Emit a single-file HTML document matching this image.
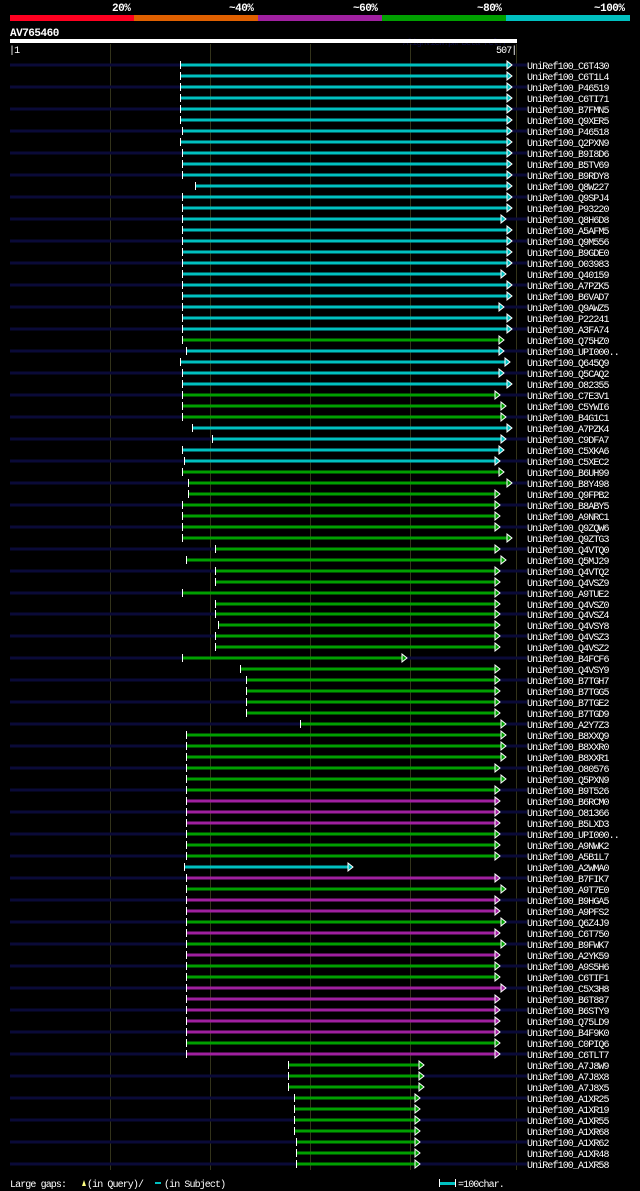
<!DOCTYPE html>
<html><head><meta charset="utf-8"><style>
html,body{margin:0;padding:0;background:#000;}
svg{display:block}
text{font-family:"Liberation Mono",monospace;fill:#fff;font-size:10px;letter-spacing:-0.9px}
.b{font-weight:bold;font-size:11px;letter-spacing:-0.5px}
.n{fill:#0a0a38}
.t{fill:#fff}
.c{fill:#00c0c0}.g{fill:#00a000}.m{fill:#a020a0}
polygon{stroke:#fff;stroke-width:1}
</style></head><body>
<svg width="640" height="1191" xmlns="http://www.w3.org/2000/svg">
<rect width="640" height="1191" fill="#000"/>
<text class="b" x="112" y="11">20%</text>
<text class="b" x="229" y="11">~40%</text>
<text class="b" x="353" y="11">~60%</text>
<text class="b" x="477" y="11">~80%</text>
<text class="b" x="594" y="11">~100%</text>
<rect x="10" y="15" width="124" height="6" fill="#ff0020"/>
<rect x="134" y="15" width="124" height="6" fill="#e06000"/>
<rect x="258" y="15" width="124" height="6" fill="#a020a0"/>
<rect x="382" y="15" width="124" height="6" fill="#00a000"/>
<rect x="506" y="15" width="124" height="6" fill="#00c0c0"/>
<text class="b" x="10" y="36">AV765460</text>
<text x="403" y="45" style="fill:#0a0a40;font-size:9px">AlignView.pm Beta rel.7</text>
<rect x="10" y="39" width="507" height="4" fill="#fff"/>
<text x="9" y="53">|1</text>
<text x="496" y="53">507|</text>
<g stroke="#33331a" stroke-width="1">
<line x1="110.5" y1="44" x2="110.5" y2="1170"/>
<line x1="210.5" y1="44" x2="210.5" y2="1170"/>
<line x1="310.5" y1="44" x2="310.5" y2="1170"/>
<line x1="410.5" y1="44" x2="410.5" y2="1170"/>
<line x1="516.5" y1="44" x2="516.5" y2="1170"/>
</g>

<g transform="translate(0,65)"><rect class="n" x="10" y="-1.5" width="517" height="3"/><rect class="t" x="180" y="-4" width="1" height="8"/><rect class="c" x="181" y="-1.5" width="326" height="3"/><polygon class="c" points="507,-4 512,0 507,4"/><text x="527" y="4">UniRef100_C6T430</text></g>
<g transform="translate(0,76)"><rect class="t" x="180" y="-4" width="1" height="8"/><rect class="c" x="181" y="-1.5" width="326" height="3"/><polygon class="c" points="507,-4 512,0 507,4"/><text x="527" y="4">UniRef100_C6T1L4</text></g>
<g transform="translate(0,87)"><rect class="n" x="10" y="-1.5" width="517" height="3"/><rect class="t" x="180" y="-4" width="1" height="8"/><rect class="c" x="181" y="-1.5" width="326" height="3"/><polygon class="c" points="507,-4 512,0 507,4"/><text x="527" y="4">UniRef100_P46519</text></g>
<g transform="translate(0,98)"><rect class="t" x="180" y="-4" width="1" height="8"/><rect class="c" x="181" y="-1.5" width="326" height="3"/><polygon class="c" points="507,-4 512,0 507,4"/><text x="527" y="4">UniRef100_C6TI71</text></g>
<g transform="translate(0,109)"><rect class="n" x="10" y="-1.5" width="517" height="3"/><rect class="t" x="180" y="-4" width="1" height="8"/><rect class="c" x="181" y="-1.5" width="326" height="3"/><polygon class="c" points="507,-4 512,0 507,4"/><text x="527" y="4">UniRef100_B7FMN5</text></g>
<g transform="translate(0,120)"><rect class="t" x="180" y="-4" width="1" height="8"/><rect class="c" x="181" y="-1.5" width="326" height="3"/><polygon class="c" points="507,-4 512,0 507,4"/><text x="527" y="4">UniRef100_Q9XER5</text></g>
<g transform="translate(0,131)"><rect class="n" x="10" y="-1.5" width="517" height="3"/><rect class="t" x="182" y="-4" width="1" height="8"/><rect class="c" x="183" y="-1.5" width="324" height="3"/><polygon class="c" points="507,-4 512,0 507,4"/><text x="527" y="4">UniRef100_P46518</text></g>
<g transform="translate(0,142)"><rect class="t" x="180" y="-4" width="1" height="8"/><rect class="c" x="181" y="-1.5" width="326" height="3"/><polygon class="c" points="507,-4 512,0 507,4"/><text x="527" y="4">UniRef100_Q2PXN9</text></g>
<g transform="translate(0,153)"><rect class="n" x="10" y="-1.5" width="517" height="3"/><rect class="t" x="182" y="-4" width="1" height="8"/><rect class="c" x="183" y="-1.5" width="324" height="3"/><polygon class="c" points="507,-4 512,0 507,4"/><text x="527" y="4">UniRef100_B9I8D6</text></g>
<g transform="translate(0,164)"><rect class="t" x="182" y="-4" width="1" height="8"/><rect class="c" x="183" y="-1.5" width="324" height="3"/><polygon class="c" points="507,-4 512,0 507,4"/><text x="527" y="4">UniRef100_B5TV69</text></g>
<g transform="translate(0,175)"><rect class="n" x="10" y="-1.5" width="517" height="3"/><rect class="t" x="182" y="-4" width="1" height="8"/><rect class="c" x="183" y="-1.5" width="324" height="3"/><polygon class="c" points="507,-4 512,0 507,4"/><text x="527" y="4">UniRef100_B9RDY8</text></g>
<g transform="translate(0,186)"><rect class="t" x="195" y="-4" width="1" height="8"/><rect class="c" x="196" y="-1.5" width="311" height="3"/><polygon class="c" points="507,-4 512,0 507,4"/><text x="527" y="4">UniRef100_Q8W227</text></g>
<g transform="translate(0,197)"><rect class="n" x="10" y="-1.5" width="517" height="3"/><rect class="t" x="182" y="-4" width="1" height="8"/><rect class="c" x="183" y="-1.5" width="324" height="3"/><polygon class="c" points="507,-4 512,0 507,4"/><text x="527" y="4">UniRef100_Q9SPJ4</text></g>
<g transform="translate(0,208)"><rect class="t" x="182" y="-4" width="1" height="8"/><rect class="c" x="183" y="-1.5" width="324" height="3"/><polygon class="c" points="507,-4 512,0 507,4"/><text x="527" y="4">UniRef100_P93220</text></g>
<g transform="translate(0,219)"><rect class="n" x="10" y="-1.5" width="517" height="3"/><rect class="t" x="182" y="-4" width="1" height="8"/><rect class="c" x="183" y="-1.5" width="318" height="3"/><polygon class="c" points="501,-4 506,0 501,4"/><text x="527" y="4">UniRef100_Q8H6D8</text></g>
<g transform="translate(0,230)"><rect class="t" x="182" y="-4" width="1" height="8"/><rect class="c" x="183" y="-1.5" width="324" height="3"/><polygon class="c" points="507,-4 512,0 507,4"/><text x="527" y="4">UniRef100_A5AFM5</text></g>
<g transform="translate(0,241)"><rect class="n" x="10" y="-1.5" width="517" height="3"/><rect class="t" x="182" y="-4" width="1" height="8"/><rect class="c" x="183" y="-1.5" width="324" height="3"/><polygon class="c" points="507,-4 512,0 507,4"/><text x="527" y="4">UniRef100_Q9M556</text></g>
<g transform="translate(0,252)"><rect class="t" x="182" y="-4" width="1" height="8"/><rect class="c" x="183" y="-1.5" width="324" height="3"/><polygon class="c" points="507,-4 512,0 507,4"/><text x="527" y="4">UniRef100_B9GDE0</text></g>
<g transform="translate(0,263)"><rect class="n" x="10" y="-1.5" width="517" height="3"/><rect class="t" x="182" y="-4" width="1" height="8"/><rect class="c" x="183" y="-1.5" width="324" height="3"/><polygon class="c" points="507,-4 512,0 507,4"/><text x="527" y="4">UniRef100_O03983</text></g>
<g transform="translate(0,274)"><rect class="t" x="182" y="-4" width="1" height="8"/><rect class="c" x="183" y="-1.5" width="318" height="3"/><polygon class="c" points="501,-4 506,0 501,4"/><text x="527" y="4">UniRef100_Q40159</text></g>
<g transform="translate(0,285)"><rect class="n" x="10" y="-1.5" width="517" height="3"/><rect class="t" x="182" y="-4" width="1" height="8"/><rect class="c" x="183" y="-1.5" width="324" height="3"/><polygon class="c" points="507,-4 512,0 507,4"/><text x="527" y="4">UniRef100_A7PZK5</text></g>
<g transform="translate(0,296)"><rect class="t" x="182" y="-4" width="1" height="8"/><rect class="c" x="183" y="-1.5" width="324" height="3"/><polygon class="c" points="507,-4 512,0 507,4"/><text x="527" y="4">UniRef100_B6VAD7</text></g>
<g transform="translate(0,307)"><rect class="n" x="10" y="-1.5" width="517" height="3"/><rect class="t" x="182" y="-4" width="1" height="8"/><rect class="c" x="183" y="-1.5" width="316" height="3"/><polygon class="c" points="499,-4 504,0 499,4"/><text x="527" y="4">UniRef100_Q9AWZ5</text></g>
<g transform="translate(0,318)"><rect class="t" x="182" y="-4" width="1" height="8"/><rect class="c" x="183" y="-1.5" width="324" height="3"/><polygon class="c" points="507,-4 512,0 507,4"/><text x="527" y="4">UniRef100_P22241</text></g>
<g transform="translate(0,329)"><rect class="n" x="10" y="-1.5" width="517" height="3"/><rect class="t" x="182" y="-4" width="1" height="8"/><rect class="c" x="183" y="-1.5" width="324" height="3"/><polygon class="c" points="507,-4 512,0 507,4"/><text x="527" y="4">UniRef100_A3FA74</text></g>
<g transform="translate(0,340)"><rect class="t" x="182" y="-4" width="1" height="8"/><rect class="g" x="183" y="-1.5" width="316" height="3"/><polygon class="g" points="499,-4 504,0 499,4"/><text x="527" y="4">UniRef100_Q75HZ0</text></g>
<g transform="translate(0,351)"><rect class="n" x="10" y="-1.5" width="517" height="3"/><rect class="t" x="186" y="-4" width="1" height="8"/><rect class="c" x="187" y="-1.5" width="312" height="3"/><polygon class="c" points="499,-4 504,0 499,4"/><text x="527" y="4">UniRef100_UPI000..</text></g>
<g transform="translate(0,362)"><rect class="t" x="180" y="-4" width="1" height="8"/><rect class="c" x="181" y="-1.5" width="324" height="3"/><polygon class="c" points="505,-4 510,0 505,4"/><text x="527" y="4">UniRef100_Q645Q9</text></g>
<g transform="translate(0,373)"><rect class="n" x="10" y="-1.5" width="517" height="3"/><rect class="t" x="182" y="-4" width="1" height="8"/><rect class="c" x="183" y="-1.5" width="316" height="3"/><polygon class="c" points="499,-4 504,0 499,4"/><text x="527" y="4">UniRef100_Q5CAQ2</text></g>
<g transform="translate(0,384)"><rect class="t" x="182" y="-4" width="1" height="8"/><rect class="c" x="183" y="-1.5" width="324" height="3"/><polygon class="c" points="507,-4 512,0 507,4"/><text x="527" y="4">UniRef100_O82355</text></g>
<g transform="translate(0,395)"><rect class="n" x="10" y="-1.5" width="517" height="3"/><rect class="t" x="182" y="-4" width="1" height="8"/><rect class="g" x="183" y="-1.5" width="312" height="3"/><polygon class="g" points="495,-4 500,0 495,4"/><text x="527" y="4">UniRef100_C7E3V1</text></g>
<g transform="translate(0,406)"><rect class="t" x="182" y="-4" width="1" height="8"/><rect class="g" x="183" y="-1.5" width="318" height="3"/><polygon class="g" points="501,-4 506,0 501,4"/><text x="527" y="4">UniRef100_C5YWI6</text></g>
<g transform="translate(0,417)"><rect class="n" x="10" y="-1.5" width="517" height="3"/><rect class="t" x="182" y="-4" width="1" height="8"/><rect class="g" x="183" y="-1.5" width="318" height="3"/><polygon class="g" points="501,-4 506,0 501,4"/><text x="527" y="4">UniRef100_B4G1C1</text></g>
<g transform="translate(0,428)"><rect class="t" x="192" y="-4" width="1" height="8"/><rect class="c" x="193" y="-1.5" width="314" height="3"/><polygon class="c" points="507,-4 512,0 507,4"/><text x="527" y="4">UniRef100_A7PZK4</text></g>
<g transform="translate(0,439)"><rect class="n" x="10" y="-1.5" width="517" height="3"/><rect class="t" x="212" y="-4" width="1" height="8"/><rect class="c" x="213" y="-1.5" width="288" height="3"/><polygon class="c" points="501,-4 506,0 501,4"/><text x="527" y="4">UniRef100_C9DFA7</text></g>
<g transform="translate(0,450)"><rect class="t" x="182" y="-4" width="1" height="8"/><rect class="c" x="183" y="-1.5" width="316" height="3"/><polygon class="c" points="499,-4 504,0 499,4"/><text x="527" y="4">UniRef100_C5XKA6</text></g>
<g transform="translate(0,461)"><rect class="n" x="10" y="-1.5" width="517" height="3"/><rect class="t" x="184" y="-4" width="1" height="8"/><rect class="c" x="185" y="-1.5" width="310" height="3"/><polygon class="c" points="495,-4 500,0 495,4"/><text x="527" y="4">UniRef100_C5XEC2</text></g>
<g transform="translate(0,472)"><rect class="t" x="182" y="-4" width="1" height="8"/><rect class="g" x="183" y="-1.5" width="316" height="3"/><polygon class="g" points="499,-4 504,0 499,4"/><text x="527" y="4">UniRef100_B6UH99</text></g>
<g transform="translate(0,483)"><rect class="n" x="10" y="-1.5" width="517" height="3"/><rect class="t" x="188" y="-4" width="1" height="8"/><rect class="g" x="189" y="-1.5" width="318" height="3"/><polygon class="g" points="507,-4 512,0 507,4"/><text x="527" y="4">UniRef100_B8Y498</text></g>
<g transform="translate(0,494)"><rect class="t" x="188" y="-4" width="1" height="8"/><rect class="g" x="189" y="-1.5" width="306" height="3"/><polygon class="g" points="495,-4 500,0 495,4"/><text x="527" y="4">UniRef100_Q9FPB2</text></g>
<g transform="translate(0,505)"><rect class="n" x="10" y="-1.5" width="517" height="3"/><rect class="t" x="182" y="-4" width="1" height="8"/><rect class="g" x="183" y="-1.5" width="312" height="3"/><polygon class="g" points="495,-4 500,0 495,4"/><text x="527" y="4">UniRef100_B8ABY5</text></g>
<g transform="translate(0,516)"><rect class="t" x="182" y="-4" width="1" height="8"/><rect class="g" x="183" y="-1.5" width="312" height="3"/><polygon class="g" points="495,-4 500,0 495,4"/><text x="527" y="4">UniRef100_A9NRC1</text></g>
<g transform="translate(0,527)"><rect class="n" x="10" y="-1.5" width="517" height="3"/><rect class="t" x="182" y="-4" width="1" height="8"/><rect class="g" x="183" y="-1.5" width="312" height="3"/><polygon class="g" points="495,-4 500,0 495,4"/><text x="527" y="4">UniRef100_Q9ZQW6</text></g>
<g transform="translate(0,538)"><rect class="t" x="182" y="-4" width="1" height="8"/><rect class="g" x="183" y="-1.5" width="324" height="3"/><polygon class="g" points="507,-4 512,0 507,4"/><text x="527" y="4">UniRef100_Q9ZTG3</text></g>
<g transform="translate(0,549)"><rect class="n" x="10" y="-1.5" width="517" height="3"/><rect class="t" x="215" y="-4" width="1" height="8"/><rect class="g" x="216" y="-1.5" width="279" height="3"/><polygon class="g" points="495,-4 500,0 495,4"/><text x="527" y="4">UniRef100_Q4VTQ0</text></g>
<g transform="translate(0,560)"><rect class="t" x="186" y="-4" width="1" height="8"/><rect class="g" x="187" y="-1.5" width="314" height="3"/><polygon class="g" points="501,-4 506,0 501,4"/><text x="527" y="4">UniRef100_Q5MJ29</text></g>
<g transform="translate(0,571)"><rect class="n" x="10" y="-1.5" width="517" height="3"/><rect class="t" x="215" y="-4" width="1" height="8"/><rect class="g" x="216" y="-1.5" width="279" height="3"/><polygon class="g" points="495,-4 500,0 495,4"/><text x="527" y="4">UniRef100_Q4VTQ2</text></g>
<g transform="translate(0,582)"><rect class="t" x="215" y="-4" width="1" height="8"/><rect class="g" x="216" y="-1.5" width="279" height="3"/><polygon class="g" points="495,-4 500,0 495,4"/><text x="527" y="4">UniRef100_Q4VSZ9</text></g>
<g transform="translate(0,593)"><rect class="n" x="10" y="-1.5" width="517" height="3"/><rect class="t" x="182" y="-4" width="1" height="8"/><rect class="g" x="183" y="-1.5" width="312" height="3"/><polygon class="g" points="495,-4 500,0 495,4"/><text x="527" y="4">UniRef100_A9TUE2</text></g>
<g transform="translate(0,604)"><rect class="t" x="215" y="-4" width="1" height="8"/><rect class="g" x="216" y="-1.5" width="279" height="3"/><polygon class="g" points="495,-4 500,0 495,4"/><text x="527" y="4">UniRef100_Q4VSZ0</text></g>
<g transform="translate(0,614)"><rect class="n" x="10" y="-1.5" width="517" height="3"/><rect class="t" x="215" y="-4" width="1" height="8"/><rect class="g" x="216" y="-1.5" width="279" height="3"/><polygon class="g" points="495,-4 500,0 495,4"/><text x="527" y="4">UniRef100_Q4VSZ4</text></g>
<g transform="translate(0,625)"><rect class="t" x="218" y="-4" width="1" height="8"/><rect class="g" x="219" y="-1.5" width="276" height="3"/><polygon class="g" points="495,-4 500,0 495,4"/><text x="527" y="4">UniRef100_Q4VSY8</text></g>
<g transform="translate(0,636)"><rect class="n" x="10" y="-1.5" width="517" height="3"/><rect class="t" x="215" y="-4" width="1" height="8"/><rect class="g" x="216" y="-1.5" width="279" height="3"/><polygon class="g" points="495,-4 500,0 495,4"/><text x="527" y="4">UniRef100_Q4VSZ3</text></g>
<g transform="translate(0,647)"><rect class="t" x="215" y="-4" width="1" height="8"/><rect class="g" x="216" y="-1.5" width="279" height="3"/><polygon class="g" points="495,-4 500,0 495,4"/><text x="527" y="4">UniRef100_Q4VSZ2</text></g>
<g transform="translate(0,658)"><rect class="n" x="10" y="-1.5" width="517" height="3"/><rect class="t" x="182" y="-4" width="1" height="8"/><rect class="g" x="183" y="-1.5" width="219" height="3"/><polygon class="g" points="402,-4 407,0 402,4"/><text x="527" y="4">UniRef100_B4FCF6</text></g>
<g transform="translate(0,669)"><rect class="t" x="240" y="-4" width="1" height="8"/><rect class="g" x="241" y="-1.5" width="254" height="3"/><polygon class="g" points="495,-4 500,0 495,4"/><text x="527" y="4">UniRef100_Q4VSY9</text></g>
<g transform="translate(0,680)"><rect class="n" x="10" y="-1.5" width="517" height="3"/><rect class="t" x="246" y="-4" width="1" height="8"/><rect class="g" x="247" y="-1.5" width="248" height="3"/><polygon class="g" points="495,-4 500,0 495,4"/><text x="527" y="4">UniRef100_B7TGH7</text></g>
<g transform="translate(0,691)"><rect class="t" x="246" y="-4" width="1" height="8"/><rect class="g" x="247" y="-1.5" width="248" height="3"/><polygon class="g" points="495,-4 500,0 495,4"/><text x="527" y="4">UniRef100_B7TGG5</text></g>
<g transform="translate(0,702)"><rect class="n" x="10" y="-1.5" width="517" height="3"/><rect class="t" x="246" y="-4" width="1" height="8"/><rect class="g" x="247" y="-1.5" width="248" height="3"/><polygon class="g" points="495,-4 500,0 495,4"/><text x="527" y="4">UniRef100_B7TGE2</text></g>
<g transform="translate(0,713)"><rect class="t" x="246" y="-4" width="1" height="8"/><rect class="g" x="247" y="-1.5" width="248" height="3"/><polygon class="g" points="495,-4 500,0 495,4"/><text x="527" y="4">UniRef100_B7TGD9</text></g>
<g transform="translate(0,724)"><rect class="n" x="10" y="-1.5" width="517" height="3"/><rect class="t" x="300" y="-4" width="1" height="8"/><rect class="g" x="301" y="-1.5" width="200" height="3"/><polygon class="g" points="501,-4 506,0 501,4"/><text x="527" y="4">UniRef100_A2Y7Z3</text></g>
<g transform="translate(0,735)"><rect class="t" x="186" y="-4" width="1" height="8"/><rect class="g" x="187" y="-1.5" width="314" height="3"/><polygon class="g" points="501,-4 506,0 501,4"/><text x="527" y="4">UniRef100_B8XXQ9</text></g>
<g transform="translate(0,746)"><rect class="n" x="10" y="-1.5" width="517" height="3"/><rect class="t" x="186" y="-4" width="1" height="8"/><rect class="g" x="187" y="-1.5" width="314" height="3"/><polygon class="g" points="501,-4 506,0 501,4"/><text x="527" y="4">UniRef100_B8XXR0</text></g>
<g transform="translate(0,757)"><rect class="t" x="186" y="-4" width="1" height="8"/><rect class="g" x="187" y="-1.5" width="314" height="3"/><polygon class="g" points="501,-4 506,0 501,4"/><text x="527" y="4">UniRef100_B8XXR1</text></g>
<g transform="translate(0,768)"><rect class="n" x="10" y="-1.5" width="517" height="3"/><rect class="t" x="186" y="-4" width="1" height="8"/><rect class="g" x="187" y="-1.5" width="308" height="3"/><polygon class="g" points="495,-4 500,0 495,4"/><text x="527" y="4">UniRef100_O80576</text></g>
<g transform="translate(0,779)"><rect class="t" x="186" y="-4" width="1" height="8"/><rect class="g" x="187" y="-1.5" width="314" height="3"/><polygon class="g" points="501,-4 506,0 501,4"/><text x="527" y="4">UniRef100_Q5PXN9</text></g>
<g transform="translate(0,790)"><rect class="n" x="10" y="-1.5" width="517" height="3"/><rect class="t" x="186" y="-4" width="1" height="8"/><rect class="g" x="187" y="-1.5" width="308" height="3"/><polygon class="g" points="495,-4 500,0 495,4"/><text x="527" y="4">UniRef100_B9T526</text></g>
<g transform="translate(0,801)"><rect class="t" x="186" y="-4" width="1" height="8"/><rect class="m" x="187" y="-1.5" width="308" height="3"/><polygon class="m" points="495,-4 500,0 495,4"/><text x="527" y="4">UniRef100_B6RCM0</text></g>
<g transform="translate(0,812)"><rect class="n" x="10" y="-1.5" width="517" height="3"/><rect class="t" x="186" y="-4" width="1" height="8"/><rect class="m" x="187" y="-1.5" width="308" height="3"/><polygon class="m" points="495,-4 500,0 495,4"/><text x="527" y="4">UniRef100_O81366</text></g>
<g transform="translate(0,823)"><rect class="t" x="186" y="-4" width="1" height="8"/><rect class="m" x="187" y="-1.5" width="308" height="3"/><polygon class="m" points="495,-4 500,0 495,4"/><text x="527" y="4">UniRef100_B5LXD3</text></g>
<g transform="translate(0,834)"><rect class="n" x="10" y="-1.5" width="517" height="3"/><rect class="t" x="186" y="-4" width="1" height="8"/><rect class="g" x="187" y="-1.5" width="308" height="3"/><polygon class="g" points="495,-4 500,0 495,4"/><text x="527" y="4">UniRef100_UPI000..</text></g>
<g transform="translate(0,845)"><rect class="t" x="186" y="-4" width="1" height="8"/><rect class="g" x="187" y="-1.5" width="308" height="3"/><polygon class="g" points="495,-4 500,0 495,4"/><text x="527" y="4">UniRef100_A9NWK2</text></g>
<g transform="translate(0,856)"><rect class="n" x="10" y="-1.5" width="517" height="3"/><rect class="t" x="186" y="-4" width="1" height="8"/><rect class="g" x="187" y="-1.5" width="308" height="3"/><polygon class="g" points="495,-4 500,0 495,4"/><text x="527" y="4">UniRef100_A5B1L7</text></g>
<g transform="translate(0,867)"><rect class="t" x="184" y="-4" width="1" height="8"/><rect class="c" x="185" y="-1.5" width="163" height="3"/><polygon class="c" points="348,-4 353,0 348,4"/><text x="527" y="4">UniRef100_A2WMA0</text></g>
<g transform="translate(0,878)"><rect class="n" x="10" y="-1.5" width="517" height="3"/><rect class="t" x="186" y="-4" width="1" height="8"/><rect class="m" x="187" y="-1.5" width="308" height="3"/><polygon class="m" points="495,-4 500,0 495,4"/><text x="527" y="4">UniRef100_B7FIK7</text></g>
<g transform="translate(0,889)"><rect class="t" x="186" y="-4" width="1" height="8"/><rect class="g" x="187" y="-1.5" width="314" height="3"/><polygon class="g" points="501,-4 506,0 501,4"/><text x="527" y="4">UniRef100_A9T7E0</text></g>
<g transform="translate(0,900)"><rect class="n" x="10" y="-1.5" width="517" height="3"/><rect class="t" x="186" y="-4" width="1" height="8"/><rect class="m" x="187" y="-1.5" width="308" height="3"/><polygon class="m" points="495,-4 500,0 495,4"/><text x="527" y="4">UniRef100_B9HGA5</text></g>
<g transform="translate(0,911)"><rect class="t" x="186" y="-4" width="1" height="8"/><rect class="m" x="187" y="-1.5" width="308" height="3"/><polygon class="m" points="495,-4 500,0 495,4"/><text x="527" y="4">UniRef100_A9PFS2</text></g>
<g transform="translate(0,922)"><rect class="n" x="10" y="-1.5" width="517" height="3"/><rect class="t" x="186" y="-4" width="1" height="8"/><rect class="g" x="187" y="-1.5" width="314" height="3"/><polygon class="g" points="501,-4 506,0 501,4"/><text x="527" y="4">UniRef100_Q6Z4J9</text></g>
<g transform="translate(0,933)"><rect class="t" x="186" y="-4" width="1" height="8"/><rect class="m" x="187" y="-1.5" width="308" height="3"/><polygon class="m" points="495,-4 500,0 495,4"/><text x="527" y="4">UniRef100_C6T750</text></g>
<g transform="translate(0,944)"><rect class="n" x="10" y="-1.5" width="517" height="3"/><rect class="t" x="186" y="-4" width="1" height="8"/><rect class="g" x="187" y="-1.5" width="314" height="3"/><polygon class="g" points="501,-4 506,0 501,4"/><text x="527" y="4">UniRef100_B9FWK7</text></g>
<g transform="translate(0,955)"><rect class="t" x="186" y="-4" width="1" height="8"/><rect class="m" x="187" y="-1.5" width="308" height="3"/><polygon class="m" points="495,-4 500,0 495,4"/><text x="527" y="4">UniRef100_A2YK59</text></g>
<g transform="translate(0,966)"><rect class="n" x="10" y="-1.5" width="517" height="3"/><rect class="t" x="186" y="-4" width="1" height="8"/><rect class="g" x="187" y="-1.5" width="308" height="3"/><polygon class="g" points="495,-4 500,0 495,4"/><text x="527" y="4">UniRef100_A9S5H6</text></g>
<g transform="translate(0,977)"><rect class="t" x="186" y="-4" width="1" height="8"/><rect class="g" x="187" y="-1.5" width="308" height="3"/><polygon class="g" points="495,-4 500,0 495,4"/><text x="527" y="4">UniRef100_C6TIF1</text></g>
<g transform="translate(0,988)"><rect class="n" x="10" y="-1.5" width="517" height="3"/><rect class="t" x="186" y="-4" width="1" height="8"/><rect class="m" x="187" y="-1.5" width="314" height="3"/><polygon class="m" points="501,-4 506,0 501,4"/><text x="527" y="4">UniRef100_C5X3H8</text></g>
<g transform="translate(0,999)"><rect class="t" x="186" y="-4" width="1" height="8"/><rect class="m" x="187" y="-1.5" width="308" height="3"/><polygon class="m" points="495,-4 500,0 495,4"/><text x="527" y="4">UniRef100_B6T887</text></g>
<g transform="translate(0,1010)"><rect class="n" x="10" y="-1.5" width="517" height="3"/><rect class="t" x="186" y="-4" width="1" height="8"/><rect class="m" x="187" y="-1.5" width="308" height="3"/><polygon class="m" points="495,-4 500,0 495,4"/><text x="527" y="4">UniRef100_B6STY9</text></g>
<g transform="translate(0,1021)"><rect class="t" x="186" y="-4" width="1" height="8"/><rect class="m" x="187" y="-1.5" width="308" height="3"/><polygon class="m" points="495,-4 500,0 495,4"/><text x="527" y="4">UniRef100_Q75LD9</text></g>
<g transform="translate(0,1032)"><rect class="n" x="10" y="-1.5" width="517" height="3"/><rect class="t" x="186" y="-4" width="1" height="8"/><rect class="m" x="187" y="-1.5" width="308" height="3"/><polygon class="m" points="495,-4 500,0 495,4"/><text x="527" y="4">UniRef100_B4F9K0</text></g>
<g transform="translate(0,1043)"><rect class="t" x="186" y="-4" width="1" height="8"/><rect class="g" x="187" y="-1.5" width="308" height="3"/><polygon class="g" points="495,-4 500,0 495,4"/><text x="527" y="4">UniRef100_C0PIQ6</text></g>
<g transform="translate(0,1054)"><rect class="n" x="10" y="-1.5" width="517" height="3"/><rect class="t" x="186" y="-4" width="1" height="8"/><rect class="m" x="187" y="-1.5" width="308" height="3"/><polygon class="m" points="495,-4 500,0 495,4"/><text x="527" y="4">UniRef100_C6TLT7</text></g>
<g transform="translate(0,1065)"><rect class="t" x="288" y="-4" width="1" height="8"/><rect class="g" x="289" y="-1.5" width="130" height="3"/><polygon class="g" points="419,-4 424,0 419,4"/><text x="527" y="4">UniRef100_A7J8W9</text></g>
<g transform="translate(0,1076)"><rect class="n" x="10" y="-1.5" width="517" height="3"/><rect class="t" x="288" y="-4" width="1" height="8"/><rect class="g" x="289" y="-1.5" width="130" height="3"/><polygon class="g" points="419,-4 424,0 419,4"/><text x="527" y="4">UniRef100_A7J8X8</text></g>
<g transform="translate(0,1087)"><rect class="t" x="288" y="-4" width="1" height="8"/><rect class="g" x="289" y="-1.5" width="130" height="3"/><polygon class="g" points="419,-4 424,0 419,4"/><text x="527" y="4">UniRef100_A7J8X5</text></g>
<g transform="translate(0,1098)"><rect class="n" x="10" y="-1.5" width="517" height="3"/><rect class="t" x="294" y="-4" width="1" height="8"/><rect class="g" x="295" y="-1.5" width="120" height="3"/><polygon class="g" points="415,-4 420,0 415,4"/><text x="527" y="4">UniRef100_A1XR25</text></g>
<g transform="translate(0,1109)"><rect class="t" x="294" y="-4" width="1" height="8"/><rect class="g" x="295" y="-1.5" width="120" height="3"/><polygon class="g" points="415,-4 420,0 415,4"/><text x="527" y="4">UniRef100_A1XR19</text></g>
<g transform="translate(0,1120)"><rect class="n" x="10" y="-1.5" width="517" height="3"/><rect class="t" x="294" y="-4" width="1" height="8"/><rect class="g" x="295" y="-1.5" width="120" height="3"/><polygon class="g" points="415,-4 420,0 415,4"/><text x="527" y="4">UniRef100_A1XR55</text></g>
<g transform="translate(0,1131)"><rect class="t" x="294" y="-4" width="1" height="8"/><rect class="g" x="295" y="-1.5" width="120" height="3"/><polygon class="g" points="415,-4 420,0 415,4"/><text x="527" y="4">UniRef100_A1XR68</text></g>
<g transform="translate(0,1142)"><rect class="n" x="10" y="-1.5" width="517" height="3"/><rect class="t" x="296" y="-4" width="1" height="8"/><rect class="g" x="297" y="-1.5" width="118" height="3"/><polygon class="g" points="415,-4 420,0 415,4"/><text x="527" y="4">UniRef100_A1XR62</text></g>
<g transform="translate(0,1153)"><rect class="t" x="296" y="-4" width="1" height="8"/><rect class="g" x="297" y="-1.5" width="118" height="3"/><polygon class="g" points="415,-4 420,0 415,4"/><text x="527" y="4">UniRef100_A1XR48</text></g>
<g transform="translate(0,1164)"><rect class="n" x="10" y="-1.5" width="517" height="3"/><rect class="t" x="296" y="-4" width="1" height="8"/><rect class="g" x="297" y="-1.5" width="118" height="3"/><polygon class="g" points="415,-4 420,0 415,4"/><text x="527" y="4">UniRef100_A1XR58</text></g>

<text x="10" y="1187">Large gaps:</text>
<polygon points="82,1186 84,1180 86,1186" style="fill:#ffff80;stroke:none"/>
<text x="87" y="1187">(in Query)/</text>
<rect x="155" y="1182" width="6" height="2" fill="#00c0c0"/>
<text x="164" y="1187">(in Subject)</text>
<rect x="439" y="1179" width="1" height="8" fill="#fff"/>
<rect x="440" y="1182" width="15" height="3" fill="#00c0c0"/>
<rect x="455" y="1179" width="1" height="8" fill="#fff"/>
<text x="458" y="1187">=100char.</text>
</svg>
</body></html>
